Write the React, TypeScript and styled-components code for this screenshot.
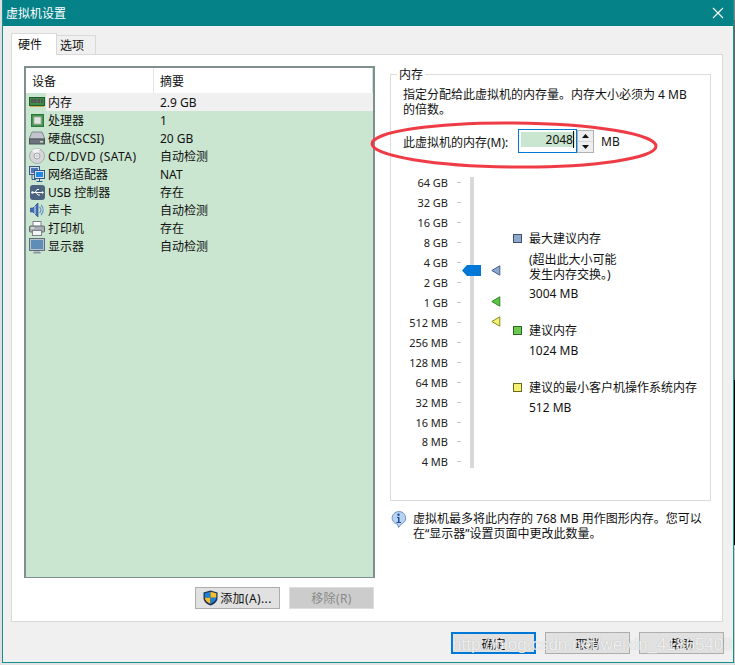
import React from 'react';
import styled, { createGlobalStyle } from 'styled-components';

const GlobalStyle = createGlobalStyle`
  html, body { margin: 0; padding: 0; background: #e4e4e4; }
  body {
    font-family: "Noto Sans", "Noto Sans CJK SC", sans-serif;
    font-size: 12px;
    color: #111;
  }
  * { box-sizing: border-box; }
`;

const RamIcon = () => (
  <svg width="16" height="12" viewBox="0 0 16 12">
    <rect x="0.5" y="1.5" width="15" height="8" fill="#3f8d4a" stroke="#1e5a2a" />
    <rect x="2" y="3" width="2.500" height="4" fill="#555" />
    <rect x="5" y="3" width="2.500" height="4" fill="#555" />
    <rect x="8.500" y="3" width="2.500" height="4" fill="#555" />
    <rect x="12" y="3" width="2" height="4" fill="#555" />
    <path d="M1 10.5h14" stroke="#c9a94a" />
  </svg>
);
const CpuIcon = () => (
  <svg width="13" height="13" viewBox="0 0 14 14">
    <rect x="0.5" y="0.5" width="13" height="13" fill="#3f9a4c" stroke="#26703a" />
    <rect x="3" y="3" width="8" height="8" fill="#e4e4de" stroke="#8a9a8a" />
  </svg>
);
const DiskIcon = () => (
  <svg width="16" height="14" viewBox="0 0 16 14">
    <path d="M3 1h10l3 7H0z" fill="#c2c6cc" stroke="#6f7780" strokeWidth="0.8" />
    <rect x="0.5" y="8" width="15" height="5" fill="#6c737c" stroke="#4b525a" />
    <rect x="11" y="10" width="3" height="1.5" fill="#c7e0a8" />
  </svg>
);
const CdIcon = () => (
  <svg width="16" height="16" viewBox="0 0 16 16">
    <circle cx="8" cy="8" r="7.5" fill="#d4d6d8" stroke="#a8acb0" />
    <path d="M8 8 3 2.5A7.5 7.5 0 0 1 11 1.2z" fill="#f2f2f4" />
    <circle cx="8" cy="8" r="3" fill="#eeeeee" stroke="#a0a4a8" />
    <circle cx="8" cy="8" r="1" fill="#ffffff" stroke="#9a9a9a" strokeWidth="0.5" />
  </svg>
);
const NetIcon = () => (
  <svg width="16" height="16" viewBox="0 0 16 16">
    <rect x="0.5" y="0.5" width="10" height="8" fill="#cfd8e4" stroke="#3a5a8a" />
    <rect x="2" y="2" width="7" height="5" fill="#4a78b8" />
    <rect x="5.5" y="4.5" width="10" height="8" fill="#d6dee8" stroke="#3a5a8a" />
    <rect x="7" y="6" width="7" height="5" fill="#1e8ae6" />
    <path d="M10.5 13v2M7.5 15.5h6M3 9v4.5h4" stroke="#3a5a8a" fill="none" />
  </svg>
);
const UsbIcon = () => (
  <svg width="15" height="15" viewBox="0 0 15 15">
    <rect width="15" height="15" rx="3" fill="#4d6480" />
    <path d="M2 7.5h10M5 7.5l2-3h2M6 7.5l2 2.5h2" stroke="#fff" fill="none" />
    <circle cx="2.5" cy="7.5" r="1.3" fill="#fff" />
    <path d="M12 6l2 1.5-2 1.5z" fill="#fff" />
  </svg>
);
const SoundIcon = () => (
  <svg width="15" height="16" viewBox="0 0 15 16">
    <path d="M0.5 6h2.5L8 1v14L3 10H0.5z" fill="#3f70b8" stroke="#2a4f88" strokeWidth="0.7" />
    <path d="M9.5 5a4 4 0 0 1 0 6M11 3a7 7 0 0 1 0 10" stroke="#6b93cc" fill="none" strokeWidth="1.2" />
    <path d="M5 4v8" stroke="#dce8f6" />
  </svg>
);
const PrinterIcon = () => (
  <svg width="16" height="15" viewBox="0 0 16 15">
    <rect x="4" y="0.5" width="8" height="5" fill="#fff" stroke="#7c828a" />
    <rect x="0.5" y="5" width="15" height="6" rx="1" fill="#a8adb4" stroke="#62686f" />
    <rect x="3.5" y="9.5" width="9" height="5" fill="#f4f4f4" stroke="#7c828a" />
    <path d="M2 7h3" stroke="#fff" />
  </svg>
);
const MonitorIcon = () => (
  <svg width="16" height="16" viewBox="0 0 16 16">
    <rect x="0.5" y="0.5" width="15" height="12" fill="#b8c2cc" stroke="#5f6d7c" />
    <rect x="2" y="2" width="12" height="9" fill="#5f8db8" />
    <path d="M5 13.5h6l1 2H4z" fill="#8a96a2" />
  </svg>
);
const ShieldIcon = () => (
  <svg width="15" height="16" viewBox="0 0 15 16">
    <path d="M7.5 0.5 14.5 2.5V8c0 3.5-3 6-7 7.5C3.500 14 0.500 11.500 0.500 8V2.500z" fill="#1b2f55" />
    <path d="M7.500 1.800V7.800H1.700V3.300z" fill="#1f7fd4" />
    <path d="M7.500 1.800 13.300 3.300V7.800H7.500z" fill="#f5c02c" />
    <path d="M7.500 7.800V14C4.600 12.700 2 10.800 1.700 7.800z" fill="#f5c02c" />
    <path d="M7.500 7.800H13.300C13 10.800 10.400 12.700 7.500 14z" fill="#1f7fd4" />
  </svg>
);
const InfoIcon = () => (
  <svg width="17" height="17" viewBox="0 0 17 17">
    <path d="M8.500 0.500a7 6.500 0 0 1 3 12.400L8.500 16.500 7.500 13.300A7 6.500 0 0 1 8.500 0.500z" fill="#b9d2f0" stroke="#6f94c8" />
    <circle cx="8.500" cy="3.800" r="1.200" fill="#1f4f9a" />
    <path d="M7 6h2.500v5H11v1H6.500v-1H8V7H7z" fill="#1f4f9a" />
  </svg>
);
const MarkerIcon = ({ fill, edge }: { fill: string; edge: string }) => (
  <svg width="10" height="11" viewBox="0 0 10 11">
    <path d="M0.800 5.500 8.800 0.800V10.200z" fill={fill} stroke={edge} />
  </svg>
);
const SpinArrow = ({ down }: { down?: boolean }) => (
  <svg width="7" height="4" viewBox="0 0 7 4">
    <path d={down ? 'M0 0h7L3.500 4z' : 'M3.500 0 7 4H0z'} fill="#111" />
  </svg>
);

const Page = styled.div`
  position: relative;
  width: 735px;
  height: 665px;
  overflow: hidden;
  display: flex;
  align-items: flex-start;
`;
const LeftEdge = styled.div`
  width: 2px;
  height: 665px;
  background: #dfdfdf;
`;
const RightEdge = styled.div`
  width: 1px;
  height: 665px;
  background: linear-gradient(#888 0 20px, #666 20px 380px, #000 380px 545px, #ccc 545px);
`;
const Window = styled.div`
  width: 732px;
  height: 663px;
  background: #f0f0f0;
  border: 1px solid #15908f;
  border-top: 0;
  display: flex;
  flex-direction: column;
`;
const TitleBar = styled.div`
  height: 26px;
  flex: none;
  background: #058288;
  color: #fff;
  padding: 0 9px 0 3px;
  display: flex;
  align-items: center;
  justify-content: space-between;
  font-size: 12px;
`;
const Tabs = styled.div`
  display: flex;
  align-items: flex-end;
  height: 29px;
  padding: 7px 0 0 8px;
  margin-bottom: -1px;
  position: relative;
  z-index: 1;
`;
const Tab = styled.div<{ $active?: boolean }>`
  width: ${(p) => (p.$active ? 46 : 39)}px;
  height: ${(p) => (p.$active ? 22 : 20)}px;
  border: 1px solid #d9d9d9;
  border-bottom: ${(p) => (p.$active ? 0 : '1px solid #d9d9d9')};
  border-left: ${(p) => (p.$active ? '1px solid #d9d9d9' : 0)};
  background: ${(p) => (p.$active ? '#fff' : '#f0f0f0')};
  padding-left: ${(p) => (p.$active ? 6 : 3)}px;
  line-height: ${(p) => (p.$active ? 22 : 19)}px;
`;
const Panel = styled.div`
  height: 568px;
  margin: 0 10px 0 8px;
  background: #fff;
  border: 1px solid #d9d9d9;
  padding: 11px 11px 0 12px;
  display: flex;
  gap: 15px;
`;
const LeftColumn = styled.div`
  width: 351px;
  flex: none;
  display: flex;
  flex-direction: column;
`;
const DeviceList = styled.div`
  height: 512px;
  border: 2px solid #7f8e8e;
  border-width: 2px 2px 1px 2px;
  background: #cbe6d0;
`;
const ListHeader = styled.div`
  height: 25px;
  background: #fff;
  display: grid;
  grid-template-columns: 127px 1fr;
  margin-right: 1px;
`;
const HeaderCell = styled.div`
  padding-left: 6px;
  line-height: 27px;
  & + & {
    border-left: 1px solid #e5e5e5;
  }
`;
const Row = styled.div`
  height: 18px;
  display: grid;
  grid-template-columns: 20px 108px 1fr;
  align-items: center;
`;
const IconCell = styled.div`
  display: flex;
  justify-content: center;
  align-items: center;
  height: 18px;
  padding-left: 2px;
`;
const NameCell = styled.div<{ $selected?: boolean; $spaced?: boolean }>`
  height: 18px;
  line-height: 20px;
  padding-left: 2px;
  letter-spacing: ${(p) => (p.$spaced ? '0.45px' : 0)};
  background: ${(p) => (p.$selected ? '#f0f0f0' : 'transparent')};
  white-space: nowrap;
`;
const ValueCell = styled(NameCell)`
  padding-left: 6px;
`;
const ListButtons = styled.div`
  display: flex;
  justify-content: flex-end;
  gap: 9px;
  margin-top: 9px;
  padding-right: 1px;
  letter-spacing: 0.4px;
`;
const Button = styled.button<{ $primary?: boolean; $disabled?: boolean }>`
  width: 85px;
  height: 22px;
  padding: 0;
  font: inherit;
  letter-spacing: inherit;
  display: flex;
  align-items: center;
  justify-content: center;
  gap: 2px;
  color: ${(p) => (p.$disabled ? '#8a8a8a' : '#111')};
  background: ${(p) => (p.$disabled ? '#cccccc' : '#e1e1e1')};
  border: ${(p) =>
    p.$primary ? '2px solid #0078d7' : p.$disabled ? '1px solid #dedede' : '1px solid #adadad'};
`;
const RightColumn = styled.div`
  width: 321px;
  flex: none;
  display: flex;
  flex-direction: column;
`;
const GroupBox = styled.fieldset`
  margin: 0;
  height: 435px;
  padding: 0 12px;
  border: 1px solid #dcdcdc;
  display: block;
  min-width: 0;
`;
const GroupTitle = styled.legend`
  margin-left: -6px;
  padding: 0 2px;
  line-height: 17px;
`;
const Description = styled.div`
  line-height: 15px;
  margin-top: 4px;
`;
const MemoryRow = styled.div`
  display: flex;
  align-items: center;
  margin-top: 12px;
  height: 24px;
`;
const MemoryLabel = styled.div`
  width: 115px;
  padding-top: 2px;
`;
const MemoryInput = styled.div`
  width: 59px;
  height: 24px;
  border: 1px solid #0078d7;
  padding: 2px 1px 5px 2px;
`;
const MemoryValue = styled.div`
  height: 100%;
  background: #cbe6d0;
  text-align: right;
  padding-right: 1px;
  line-height: 15px;
  font-size: 12px;
`;
const Caret = styled.span`
  border-right: 1px solid #111;
`;
const Spinner = styled.div`
  width: 17px;
  height: 23px;
  border: 1px solid #b0b0b0;
  background: #d8d8d8;
  display: flex;
  flex-direction: column;
  gap: 1px;
`;
const SpinButton = styled.div`
  flex: 1;
  background: #eeeeee;
  display: flex;
  align-items: center;
  justify-content: center;
`;
const MemoryUnit = styled.div`
  margin-left: 7px;
`;
const SliderArea = styled.div`
  display: flex;
  margin-top: 24px;
  height: 291px;
`;
const Scale = styled.div`
  width: 58px;
  flex: none;
`;
const ScaleRows = styled.div`
  margin: -4px 0 0 -1px;
  width: 59px;
`;
const ScaleRow = styled.div`
  height: 19.93px;
  display: flex;
  align-items: center;
  justify-content: flex-end;
  font-size: 11px;
  color: #222;
`;
const Tick = styled.span`
  width: 4px;
  height: 1px;
  background: #c8c8c8;
  margin-left: 9px;
`;
const Track = styled.div`
  width: 4px;
  flex: none;
  margin-left: 9px;
  background: #d8d8d8;
  position: relative;
`;
const Thumb = styled.div`
  position: absolute;
  left: -8px;
  top: 88px;
  width: 19px;
  height: 11px;
  background: #0078d7;
  clip-path: polygon(0 50%, 5px 0, 100% 0, 100% 100%, 5px 100%);
`;
const Marker = styled.div<{ $top: number }>`
  position: absolute;
  left: 21px;
  top: ${(p) => p.$top}px;
  display: flex;
`;
const Legend = styled.div`
  margin-left: 39px;
  padding-top: 54px;
  display: flex;
  flex-direction: column;
  gap: 22px;
`;
const LegendItem = styled.div`
  display: grid;
  grid-template-columns: 16px 1fr;
  align-items: start;
`;
const Swatch = styled.span<{ $color: string; $edge: string }>`
  width: 9px;
  height: 9px;
  margin-top: 3px;
  background: ${(p) => p.$color};
  border: 1px solid ${(p) => p.$edge};
`;
const LegendText = styled.div`
  display: flex;
  flex-direction: column;
  gap: 5px;
  line-height: 15px;
  white-space: nowrap;
`;
const LegendCaution = styled.div`
  margin: 1px 0 -1px;
`;
const Note = styled.div`
  display: flex;
  gap: 6px;
  margin-top: 10px;
  line-height: 15px;
`;
const NoteIcon = styled.div`
  width: 17px;
  flex: none;
`;
const Footer = styled.div`
  display: flex;
  justify-content: flex-end;
  gap: 9px;
  padding: 10px 9px 0 0;
  button {
    padding-top: 2px;
  }
`;
const Annotation = styled.svg`
  position: absolute;
  left: 365px;
  top: 116px;
  pointer-events: none;
`;
const Watermark = styled.div`
  position: absolute;
  left: 452px;
  top: 634px;
  font-family: "Liberation Sans", sans-serif;
  font-size: 17px;
  line-height: 22px;
  color: rgba(255, 255, 255, 0.82);
  text-shadow: 0 0 1px rgba(120, 120, 120, 0.55);
  white-space: nowrap;
  pointer-events: none;
`;

const devices = [
  { name: '内存', value: '2.9 GB', icon: <RamIcon /> },
  { name: '处理器', value: '1', icon: <CpuIcon /> },
  { name: '硬盘(SCSI)', value: '20 GB', icon: <DiskIcon /> },
  { name: 'CD/DVD (SATA)', value: '自动检测', icon: <CdIcon />, spaced: true },
  { name: '网络适配器', value: 'NAT', icon: <NetIcon /> },
  { name: 'USB 控制器', value: '存在', icon: <UsbIcon /> },
  { name: '声卡', value: '自动检测', icon: <SoundIcon /> },
  { name: '打印机', value: '存在', icon: <PrinterIcon /> },
  { name: '显示器', value: '自动检测', icon: <MonitorIcon /> },
];

const scale = [
  '64 GB', '32 GB', '16 GB', '8 GB', '4 GB', '2 GB', '1 GB',
  '512 MB', '256 MB', '128 MB', '64 MB', '32 MB', '16 MB', '8 MB', '4 MB',
];

const App = () => {
  return (
    <Page>
      <GlobalStyle />
      <LeftEdge />
      <Window>
        <TitleBar>
          虚拟机设置
          <svg width="12" height="12" viewBox="0 0 12 12">
            <path d="M1 1l10 10M11 1 1 11" stroke="#fff" strokeWidth="1.1" />
          </svg>
        </TitleBar>
        <Tabs>
          <Tab $active>硬件</Tab>
          <Tab>选项</Tab>
        </Tabs>
        <Panel>
          <LeftColumn>
            <DeviceList>
              <ListHeader>
                <HeaderCell>设备</HeaderCell>
                <HeaderCell>摘要</HeaderCell>
              </ListHeader>
              {devices.map((d, i) => (
                <Row key={d.name}>
                  <IconCell>{d.icon}</IconCell>
                  <NameCell $selected={i === 0} $spaced={d.spaced}>
                    {d.name}
                  </NameCell>
                  <ValueCell $selected={i === 0}>{d.value}</ValueCell>
                </Row>
              ))}
            </DeviceList>
            <ListButtons>
              <Button>
                <ShieldIcon />
                添加(A)...
              </Button>
              <Button $disabled>移除(R)</Button>
            </ListButtons>
          </LeftColumn>
          <RightColumn>
            <GroupBox>
              <GroupTitle>内存</GroupTitle>
              <Description>
                指定分配给此虚拟机的内存量。内存大小必须为 4 MB
                <br />
                的倍数。
              </Description>
              <MemoryRow>
                <MemoryLabel>此虚拟机的内存(M):</MemoryLabel>
                <MemoryInput>
                  <MemoryValue>
                    <Caret>2048</Caret>
                  </MemoryValue>
                </MemoryInput>
                <Spinner>
                  <SpinButton>
                    <SpinArrow />
                  </SpinButton>
                  <SpinButton>
                    <SpinArrow down />
                  </SpinButton>
                </Spinner>
                <MemoryUnit>MB</MemoryUnit>
              </MemoryRow>
              <SliderArea>
                <Scale>
                  <ScaleRows>
                    {scale.map((s) => (
                      <ScaleRow key={s}>
                        {s}
                        <Tick />
                      </ScaleRow>
                    ))}
                  </ScaleRows>
                </Scale>
                <Track>
                  <Thumb />
                  <Marker $top={88}>
                    <MarkerIcon fill="#8fa8cc" edge="#3f5f8f" />
                  </Marker>
                  <Marker $top={119}>
                    <MarkerIcon fill="#5fc04a" edge="#2a8a20" />
                  </Marker>
                  <Marker $top={139}>
                    <MarkerIcon fill="#f4f070" edge="#8a8a20" />
                  </Marker>
                </Track>
                <Legend>
                  <LegendItem>
                    <Swatch $color="#8fa8cc" $edge="#3f5070" />
                    <LegendText>
                      <div>最大建议内存</div>
                      <LegendCaution>
                        (超出此大小可能
                        <br />
                        发生内存交换。)
                      </LegendCaution>
                      <div>3004 MB</div>
                    </LegendText>
                  </LegendItem>
                  <LegendItem>
                    <Swatch $color="#6cc850" $edge="#2a6a20" />
                    <LegendText>
                      <div>建议内存</div>
                      <div>1024 MB</div>
                    </LegendText>
                  </LegendItem>
                  <LegendItem>
                    <Swatch $color="#f6f070" $edge="#6a6a20" />
                    <LegendText>
                      <div>建议的最小客户机操作系统内存</div>
                      <div>512 MB</div>
                    </LegendText>
                  </LegendItem>
                </Legend>
              </SliderArea>
            </GroupBox>
            <Note>
              <NoteIcon>
                <InfoIcon />
              </NoteIcon>
              <div>
                虚拟机最多将此内存的 768 MB 用作图形内存。您可以
                <br />
                在“显示器”设置页面中更改此数量。
              </div>
            </Note>
          </RightColumn>
        </Panel>
        <Footer>
          <Button $primary>确定</Button>
          <Button>取消</Button>
          <Button>帮助</Button>
        </Footer>
      </Window>
      <RightEdge />
      <Annotation width="300" height="60" viewBox="0 0 300 60">
        <ellipse cx="149" cy="29" rx="142" ry="22" fill="none" stroke="#ef3b46" strokeWidth="3" transform="rotate(0.5 149 29)" />
      </Annotation>
      <Watermark>http://blog.csdn.net/weixin_41865408</Watermark>
    </Page>
  );
};

export default App;
